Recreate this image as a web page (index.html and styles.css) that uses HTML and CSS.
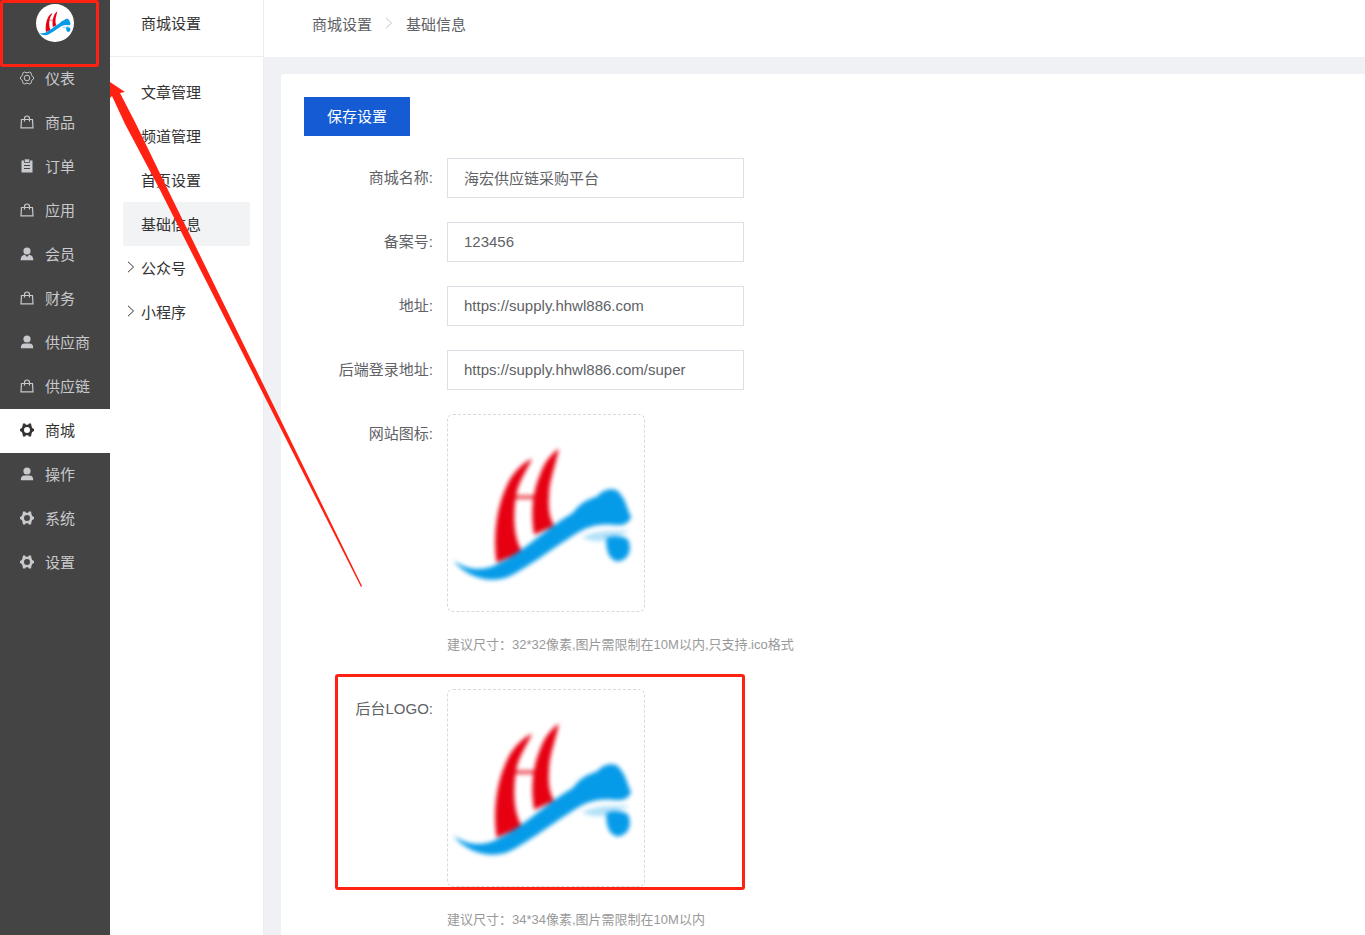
FILE: index.html
```html
<!DOCTYPE html>
<html lang="zh-CN">
<head>
  <meta charset="UTF-8" />
  <meta name="viewport" content="width=device-width, initial-scale=1.0" />
  <title>商城设置 - 基础信息</title>
  <link rel="stylesheet" href="styles.css">
</head>
<body>
  <!-- Shared icons -->
  <svg class="sprite" aria-hidden="true">
    <symbol id="logo" viewBox="0 0 198 198">
      <g fill="#e60012">
        <path d="M49 149 C45 118 50 90 61 68 C67 57 75 49 85 44 C79 57 72 66 69 80 C65 104 67 126 75 138 Z"/>
        <path d="M87 121 C83 98 86 76 93 60 C97 49 103 40 112 34 C108 54 102 66 102 82 C101 96 103 104 107 112 Z"/>
        <path d="M67 81 H89 V85 H67 Z" opacity=".7"/>
      </g>
      <g fill="#069be9">
        <path d="M5 147 C20 157 36 159 53 149 C79 136 101 113 126 99 C135 87 143 85 151 82 C158 73 171 73 174 80 C180 86 181 96 185 103 C182 110 177 112 168 111 C147 109 136 115 123 124 C101 138 79 155 60 164 C42 170 20 165 5 147 Z"/>
        <path d="M160 124 C166 122 177 121 182 126 C186 136 183 146 172 148 C164 147 159 139 160 124 Z"/>
      </g>
      <path d="M135 124 C146 117 161 117 183 117 C177 122 168 121 161 126 C151 129 144 127 135 124 Z" fill="#069be9" opacity=".3"/>
    </symbol>
    <symbol id="i-dash" viewBox="0 0 14 14">
      <g fill="none" stroke="currentColor">
        <path d="M4.6 1 L6 1.7 H8 L9.4 1 L11.3 2.1 L11.4 3.8 L12.4 5.4 L13.5 6 V8 L12.4 8.6 L11.4 10.2 L11.3 11.9 L9.4 13 L8 12.3 H6 L4.6 13 L2.7 11.9 L2.6 10.2 L1.6 8.6 L.5 8 V6 L1.6 5.4 L2.6 3.8 L2.7 2.1 Z"/>
        <circle cx="7" cy="7" r="2.8"/>
      </g>
    </symbol>
    <symbol id="i-bag" viewBox="0 0 14 14">
      <path d="M1.5 4.5 H12.5 L13 12.9 H1 Z M4.5 6.5 V3.4 C4.5 .2 9.5 .2 9.5 3.4 V6.5" fill="none" stroke="currentColor" stroke-width="1.2"/>
    </symbol>
    <symbol id="i-order" viewBox="0 0 14 14">
      <path fill="currentColor" fill-rule="evenodd" d="M1.5 1.5 H4 V3.7 H10 V1.5 H12.5 V13.5 H1.5 Z M4 6 V7 H10 V6 Z M4 9 V10 H10 V9 Z"/>
      <path fill="currentColor" d="M4.7 .3 H9.3 V3 H4.7 Z"/>
    </symbol>
    <symbol id="i-member" viewBox="0 0 14 14">
      <g fill="currentColor">
        <circle cx="7" cy="4" r="3.6"/>
        <path d="M.6 13.3 C.6 9.8 2.3 8 5 7.8 L7 10 L9 7.8 C11.7 8 13.4 9.8 13.4 13.3 Z"/>
      </g>
    </symbol>
    <symbol id="i-user" viewBox="0 0 14 14">
      <g fill="currentColor">
        <circle cx="7" cy="4" r="3.6"/>
        <path d="M.9 13.3 V12 C.9 10 2.4 8.6 4.4 8.6 H9.6 C11.6 8.6 13.1 10 13.1 12 V13.3 Z"/>
      </g>
    </symbol>
    <symbol id="i-gear" viewBox="0 0 14 14">
      <path fill="currentColor" fill-rule="evenodd" d="M3 .4 H5.2 L5.8 1.7 H8.2 L8.8 .4 H11 L11.6 3.4 L12.2 5 L14 6 V8 L12.2 9 L11.6 10.6 L11 13.6 H8.8 L8.2 12.3 H5.8 L5.2 13.6 H3 L2.4 10.6 L1.8 9 L0 8 V6 L1.8 5 L2.4 3.4 Z M7 4 A3 3 0 1 0 7 10 A3 3 0 1 0 7 4 Z"/>
    </symbol>
    <symbol id="i-arrow" viewBox="0 0 8 12">
      <path d="M1 .8 L6.5 6 L1 11.2" fill="none" stroke="currentColor"/>
    </symbol>
  </svg>

  <div class="layout">
    <nav class="sidebar">
      <div class="brand"><svg class="brand-logo"><use href="#logo"/></svg></div>
      <a href="#" class="nav-item"><svg class="icon"><use href="#i-dash"/></svg>仪表</a>
      <a href="#" class="nav-item"><svg class="icon"><use href="#i-bag"/></svg>商品</a>
      <a href="#" class="nav-item"><svg class="icon"><use href="#i-order"/></svg>订单</a>
      <a href="#" class="nav-item"><svg class="icon"><use href="#i-bag"/></svg>应用</a>
      <a href="#" class="nav-item"><svg class="icon"><use href="#i-member"/></svg>会员</a>
      <a href="#" class="nav-item"><svg class="icon"><use href="#i-bag"/></svg>财务</a>
      <a href="#" class="nav-item"><svg class="icon"><use href="#i-user"/></svg>供应商</a>
      <a href="#" class="nav-item"><svg class="icon"><use href="#i-bag"/></svg>供应链</a>
      <a href="#" class="nav-item active"><svg class="icon"><use href="#i-gear"/></svg>商城</a>
      <a href="#" class="nav-item"><svg class="icon"><use href="#i-user"/></svg>操作</a>
      <a href="#" class="nav-item"><svg class="icon"><use href="#i-gear"/></svg>系统</a>
      <a href="#" class="nav-item"><svg class="icon"><use href="#i-gear"/></svg>设置</a>
    </nav>

    <nav class="submenu">
      <div class="submenu-title">商城设置</div>
      <div class="submenu-list">
        <a href="#" class="sub-item">文章管理</a>
        <a href="#" class="sub-item">频道管理</a>
        <a href="#" class="sub-item">首页设置</a>
        <a href="#" class="sub-item active">基础信息</a>
        <a href="#" class="sub-item parent"><svg class="chevron"><use href="#i-arrow"/></svg>公众号</a>
        <a href="#" class="sub-item parent"><svg class="chevron"><use href="#i-arrow"/></svg>小程序</a>
      </div>
    </nav>

    <main class="main">
      <div class="breadcrumb">
        <a href="#">商城设置</a>
        <svg class="chevron"><use href="#i-arrow"/></svg>
        <span>基础信息</span>
      </div>

      <form class="card">
        <button type="button" class="save-btn">保存设置</button>

        <div class="form-item">
          <label for="name">商城名称:</label>
          <input type="text" id="name" class="input" value="海宏供应链采购平台" />
        </div>
        <div class="form-item">
          <label for="record">备案号:</label>
          <input type="text" id="record" class="input" value="123456" />
        </div>
        <div class="form-item">
          <label for="address">地址:</label>
          <input type="text" id="address" class="input" value="https://supply.hhwl886.com" />
        </div>
        <div class="form-item">
          <label for="login">后端登录地址:</label>
          <input type="text" id="login" class="input" value="https://supply.hhwl886.com/super" />
        </div>
        <div class="form-item">
          <label for="favicon">网站图标:</label>
          <div class="field">
            <button type="button" id="favicon" class="upload"><svg class="upload-img"><use href="#logo"/></svg></button>
            <p class="hint">建议尺寸：32*32像素,图片需限制在10M以内,只支持.ico格式</p>
          </div>
        </div>
        <div class="form-item">
          <label for="logo-upload">后台LOGO:</label>
          <div class="field">
            <button type="button" id="logo-upload" class="upload"><svg class="upload-img"><use href="#logo"/></svg></button>
            <p class="hint">建议尺寸：34*34像素,图片需限制在10M以内</p>
          </div>
        </div>
      </form>
    </main>
  </div>

  <!-- Callouts over the page -->
  <div class="mark mark-brand"></div>
  <div class="mark mark-logo"></div>
  <svg class="mark-arrow" viewBox="0 0 252 505" aria-hidden="true">
    <path d="M0 0 L15 10 L10 11 L26 42 L58 108 L252 504 L251 505 L50 108 L15 42 L2 14 L0 16 Z" fill="#ff2213"/>
  </svg>
</body>
</html>
```
FILE: styles.css
```css
* {
  box-sizing: border-box;
}

body {
  margin: 0;
  font-family: "Liberation Sans", "Noto Sans CJK SC", sans-serif;
  font-size: 15px;
  color: #606266;
  background-color: #f0f1f5;
}

a {
  color: inherit;
  text-decoration: none;
}

.sprite {
  display: none;
}

.layout {
  display: flex;
  height: 100vh;
  overflow: hidden;
}

/* Dark main menu */
.sidebar {
  flex: none;
  width: 110px;
  background-color: #444;
  color: #c8c9cc;
}

.brand {
  height: 57px;
  padding-top: 4px;
}

.brand-logo {
  display: block;
  width: 38px;
  height: 38px;
  margin: 0 auto;
  padding: 1px;
  border-radius: 50%;
  background-color: #fff;
}

.nav-item {
  display: flex;
  align-items: center;
  gap: 11px;
  height: 44px;
  padding: 0 0 3px 20px;
}

.nav-item.active {
  background-color: #fff;
  color: #333;
}

.icon {
  width: 14px;
  height: 14px;
}

/* Second level menu */
.submenu {
  flex: none;
  width: 154px;
  background-color: #fff;
  border-right: 1px solid #ebedf0;
  color: #333;
}

.submenu-title {
  height: 57px;
  padding-left: 31px;
  line-height: 48px;
  border-bottom: 1px solid #ebedf0;
}

.submenu-list {
  padding: 13px;
}

.sub-item {
  display: flex;
  align-items: center;
  height: 44px;
  padding: 0 0 2px 18px;
  border-radius: 2px;
}

.sub-item.active {
  background-color: #f2f3f5;
}

.sub-item.parent {
  gap: 6px;
  padding-left: 4px;
}

.chevron {
  width: 8px;
  height: 12px;
}

/* Content */
.main {
  flex: 1;
  min-width: 0;
}

.breadcrumb {
  display: flex;
  align-items: center;
  gap: 13px;
  height: 57px;
  padding: 0 48px 11px;
  background-color: #fff;
}

.breadcrumb .chevron {
  color: #c0c4cc;
}

.card {
  margin: 17px 0 0 17px;
  padding: 23px;
  border-radius: 3px 0 0 3px;
  background-color: #fff;
}

.save-btn {
  display: block;
  height: 39px;
  margin-bottom: 22px;
  padding: 0 23px 2px;
  border: none;
  background-color: #155bd4;
  color: #fff;
  font: inherit;
  cursor: pointer;
}

.form-item {
  display: flex;
  gap: 14px;
  margin-bottom: 24px;
}

.form-item label {
  flex: none;
  width: 129px;
  line-height: 40px;
  text-align: right;
}

.input {
  width: 297px;
  height: 40px;
  padding: 0 16px 2px;
  border: 1px solid #dcdfe6;
  outline: none;
  background-color: #fff;
  color: #606266;
  font: inherit;
}

.input:focus {
  border-color: #155bd4;
}

.upload {
  display: block;
  width: 198px;
  height: 198px;
  padding: 0;
  border: 1px dashed #d9d9d9;
  border-radius: 6px;
  background-color: #fff;
  cursor: pointer;
}

.upload-img {
  display: block;
  width: 196px;
  height: 196px;
  filter: blur(2px);
}

.hint {
  margin: 13px 0 0;
  font-size: 13px;
  line-height: 40px;
  color: #999;
}

/* Red callouts */
.mark {
  position: absolute;
  border: 3px solid #ff2213;
  border-radius: 3px;
  pointer-events: none;
}

.mark-brand {
  top: 0;
  left: 0;
  width: 99px;
  height: 67px;
}

.mark-logo {
  top: 674px;
  left: 335px;
  width: 410px;
  height: 216px;
}

.mark-arrow {
  position: absolute;
  top: 82px;
  left: 110px;
  width: 252px;
  height: 505px;
  pointer-events: none;
}
```
